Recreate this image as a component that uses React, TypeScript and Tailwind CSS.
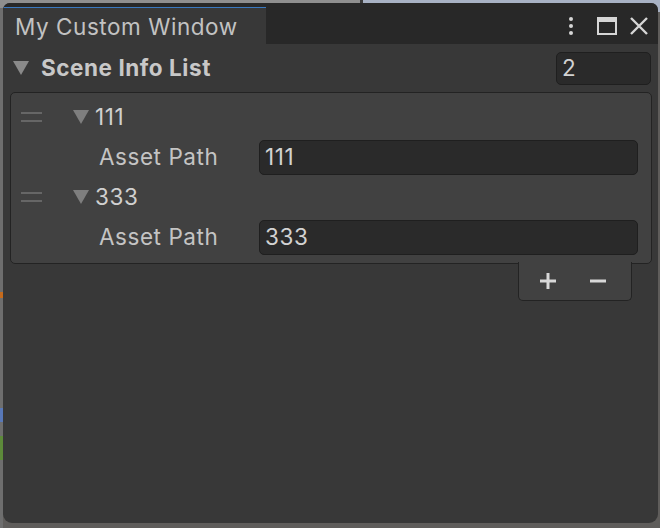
function Triangle({ className }: { className?: string }) {
  return (
    <svg width="16" height="14" viewBox="0 0 16 14" className={className}>
      <path d="M0 0 H16 L8 14 Z" fill="currentColor" />
    </svg>
  );
}

function DragHandle() {
  return (
    <div className="flex w-[21px] flex-col gap-[6px]">
      <div className="h-[2px] bg-[#666666]" />
      <div className="h-[2px] bg-[#666666]" />
    </div>
  );
}

function Field({ value, className }: { value: string; className?: string }) {
  return (
    <div
      className={`flex items-center rounded-[5px] border border-[#1f1f1f] bg-[#2a2a2a] pl-[5px] text-[#d2d2d2] ${className ?? ''}`}
    >
      {value}
    </div>
  );
}

function Element({ name }: { name: string }) {
  return (
    <div className="flex flex-col">
      <div className="flex h-[40px] items-center">
        <div className="ml-[10px]">
          <DragHandle />
        </div>
        <Triangle className="ml-[31px] text-[#7e7e7e]" />
        <span className="ml-[6px] text-[#d0d0d0]">{name}</span>
      </div>
      <div className="flex h-[40px] items-center">
        <span className="ml-[88px] w-[160px] text-[#c4c4c4]">Asset Path</span>
        <Field value={name} className="mr-[13px] h-[35px] flex-1" />
      </div>
    </div>
  );
}

export default function App() {
  return (
    <div
      className="flex h-[528px] w-[660px] overflow-hidden bg-[linear-gradient(to_bottom,transparent_12px,#5f5d5b_12px),linear-gradient(to_right,#8f8f8f_360px,#3a3a3a_360px,#3a3a3a_363px,#a8b2c4_363px)] text-[22.5px] tracking-[0.55px] [font-family:Inter,'Noto_Sans',sans-serif]"
    >
      <div className="mt-[8px] flex w-[3px] flex-col bg-[#6e6e6e]">
        <div className="h-[284px]" />
        <div className="h-[6px] bg-[#c56a1c]" />
        <div className="h-[110px]" />
        <div className="h-[14px] bg-[#5878b8]" />
        <div className="h-[14px]" />
        <div className="h-[24px] bg-[#5d8a3a]" />
      </div>
      <div className="mt-[3px] flex h-[520px] w-[655px] flex-col overflow-hidden rounded-t-[7px] rounded-b-[9px] bg-[#383838]">
        {/* tab bar */}
        <div className="flex h-[41px] bg-[#282828]">
          <div className="mt-[4px] flex w-[263px] flex-col">
            <div className="h-[3px] rounded-tl-[5px] bg-[#3a79c0]" />
            <div className="flex flex-1 items-center bg-[#383838] pt-[2px] pl-[12px] text-[#c2c2c2]">
              My Custom Window
            </div>
          </div>
          <div className="ml-auto mr-[8px] flex items-center pt-[4px] text-[#d6d6d6]">
            <svg width="6" height="20" viewBox="0 0 6 20">
              <circle cx="3" cy="3" r="2" fill="currentColor" />
              <circle cx="3" cy="10" r="2" fill="currentColor" />
              <circle cx="3" cy="17" r="2" fill="currentColor" />
            </svg>
            <svg width="22" height="20" viewBox="0 0 22 20" className="ml-[22px]">
              <rect x="2" y="2" width="18" height="16" fill="none" stroke="currentColor" strokeWidth="2" />
              <rect x="2" y="2" width="18" height="4" fill="currentColor" />
            </svg>
            <svg width="22" height="20" viewBox="0 0 22 20" className="ml-[10px]">
              <path d="M3 2 L19 18 M19 2 L3 18" stroke="currentColor" strokeWidth="2.4" />
            </svg>
          </div>
        </div>

        {/* header row */}
        <div className="flex h-[48px] items-center">
          <Triangle className="ml-[10px] text-[#8a8a8a]" />
          <span className="ml-[12px] font-bold text-[#c8c8c8]">Scene Info List</span>
          <Field value="2" className="ml-auto mr-[7px] h-[33px] w-[95px]" />
        </div>

        {/* list box */}
        <div className="flex flex-col pr-[6px] pl-[7px]">
          <div className="flex flex-col rounded-[5px] border border-[#232323] bg-[#414141] pt-[4px] pb-[6px]">
            <Element name="111" />
            <Element name="333" />
          </div>
          <div className="relative z-10 -mt-[2px] ml-auto mr-[20px] flex h-[39px] w-[114px] items-center rounded-b-[5px] border border-t-0 border-[#232323] bg-[#414141] text-[#d8d8d8]">
            <svg width="20" height="20" viewBox="0 0 20 20" className="ml-[19px]">
              <path d="M10 2 V18 M2 10 H18" stroke="currentColor" strokeWidth="3" />
            </svg>
            <svg width="18" height="20" viewBox="0 0 18 20" className="ml-[31px]">
              <path d="M1 10 H17" stroke="currentColor" strokeWidth="3" />
            </svg>
          </div>
        </div>
      </div>
    </div>
  );
}
